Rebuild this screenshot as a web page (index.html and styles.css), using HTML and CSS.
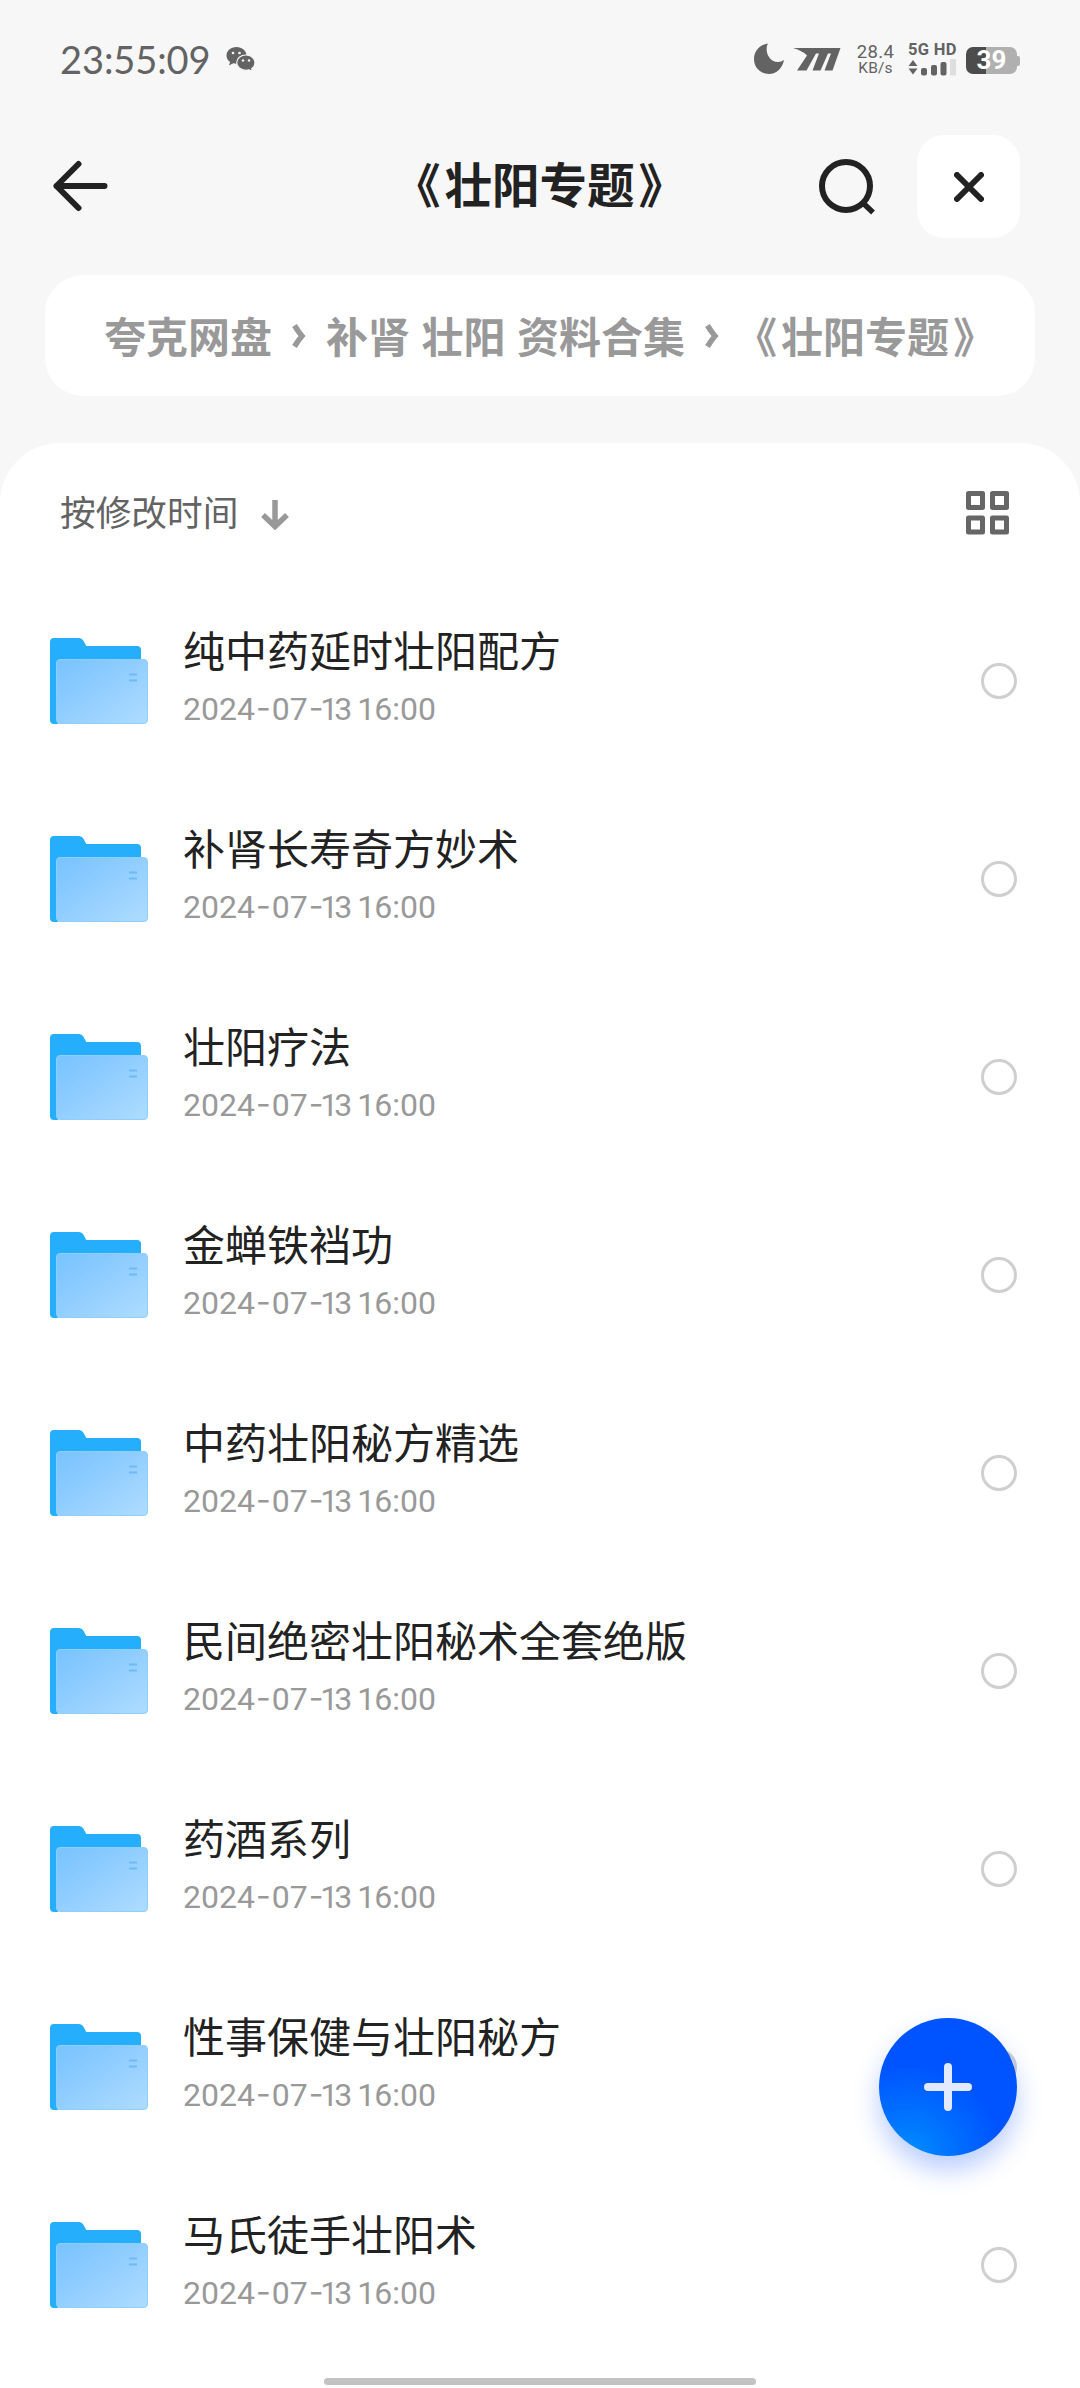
FILE: index.html
```html
<!DOCTYPE html>
<html lang="zh-CN">
<head>
<meta charset="utf-8">
<title>《壮阳专题》</title>
<link rel="stylesheet" href="styles.css">
</head>
<body>
<svg class="defs" width="0" height="0" aria-hidden="true">
  <defs>
    <linearGradient id="front" x1="0" y1="0.1" x2="0.9" y2="1">
      <stop offset="0" stop-color="#7ac4ff"/>
      <stop offset="0.35" stop-color="#8bcbff"/>
      <stop offset="1" stop-color="#acdbff"/>
    </linearGradient>
    <symbol id="folder" viewBox="0 0 98 86">
      <path d="M4 0H29Q32 0 33.300 2.500L36.300 8H87Q91 8 91 12V40H8V86H4Q0 86 0 82V4Q0 0 4 0Z" fill="#25aefc"/>
      <rect x="6.500" y="21.500" width="91" height="64" rx="3.500" fill="url(#front)" stroke="#8fcfff"/>
      <path d="M79 36.500H87M79 42.500H87" stroke="#6fb9f4" stroke-width="2.200"/>
    </symbol>
  </defs>
</svg>
<div class="screen">
  <div class="status">
    <span class="clock">23:55:09</span>
    <svg class="wechat" width="30" height="26" viewBox="0 0 30 26">
      <path d="M10.500 1C4.700 1 .5 4.800.5 9.500c0 2.700 1.400 4.900 3.600 6.500L3 19.500 7.200 17.300c1 .3 2.200.5 3.300.5C16 17.800 20.500 14 20.500 9.500S16 1 10.500 1Z" fill="#636363"/>
      <path d="M20 9C14.600 9 10.700 12.500 10.700 16.700S14.600 24.300 20 24.300c1.100 0 2.100-.2 3.100-.5L26.500 25.600 25.700 22.800C27.800 21.300 29 19.200 29 16.700 29 12.500 25 9 20 9Z" fill="#636363" stroke="#f7f7f7" stroke-width="1.200"/>
      <g fill="#f7f7f7"><circle cx="7" cy="7" r="1.300"/><circle cx="13.500" cy="7" r="1.300"/><circle cx="17" cy="14.500" r="1.200"/><circle cx="23" cy="14.500" r="1.200"/></g>
    </svg>
    <svg class="moon" width="30" height="31" viewBox="0 0 30 31"><path d="M14 .5C10 8 15 19 24 19Q27 19 30 17C28.500 25 22.500 31 15 31 6.500 31 0 24.500 0 16 0 8 6 1.500 14 .5Z" fill="#636363"/></svg>
    <svg class="mlogo" width="48" height="23" viewBox="0 0 48 23"><path d="M0 0H47.500L39.500 22.500H31.500L38 5.500H35L27.500 22.500H19.500L26 5.500H23L13.500 22.500H4L14 7.500Q10 3 0 0Z" fill="#636363"/></svg>
    <div class="speed"><span class="rate">28.4</span><span class="unit">KB/s</span></div>
    <div class="signal">
      <span class="net">5G HD</span>
      <svg width="48" height="17" viewBox="0 0 48 17">
        <path d="M5 1 9.500 7H.5ZM5 15.500 9.500 9.500H.5Z" fill="#636363"/>
        <rect x="13" y="9" width="6" height="7.500" rx="2" fill="#636363"/><rect x="23" y="6" width="6" height="10.500" rx="2" fill="#636363"/><rect x="32.500" y="3" width="6" height="13.500" rx="2" fill="#636363"/><rect x="42" y="0" width="6" height="16.500" rx="1" fill="#dedede"/>
      </svg>
    </div>
    <div class="battery"><span>39</span></div>
  </div>

  <header class="bar">
    <svg class="back" width="56" height="52" viewBox="0 0 56 52"><path d="M26 4 4 26 26 48M4 26H52" transform="translate(-.5 0)" fill="none" stroke="#222" stroke-width="6" stroke-linecap="round" stroke-linejoin="round"/></svg>
    <h1><span class="open">《</span>壮阳专题<span class="shut">》</span></h1>
    <svg class="search" width="58" height="58" viewBox="0 0 58 58"><circle cx="27" cy="27" r="24" fill="none" stroke="#222" stroke-width="6"/><path d="M43.500 43.500 54 53.500" stroke="#222" stroke-width="5.500"/></svg>
    <div class="close"><svg width="30" height="30" viewBox="0 0 30 30"><path d="M3 3 27 27M27 3 3 27" stroke="#222" stroke-width="6" stroke-linecap="round"/></svg></div>
  </header>

  <nav class="crumbs">
    <span>夸克网盘</span>
    <svg width="14" height="24" viewBox="0 0 14 24"><path d="M2.500 1.500Q6.500 8 10 12 6.500 16 2.500 22.500" fill="none" stroke="#999" stroke-width="5.500"/></svg>
    <span>补肾 壮阳 资料合集</span>
    <svg width="14" height="24" viewBox="0 0 14 24"><path d="M2.500 1.500Q6.500 8 10 12 6.500 16 2.500 22.500" fill="none" stroke="#999" stroke-width="5.500"/></svg>
    <span class="current"><span class="open">《</span>壮阳专题<span class="shut">》</span></span>
  </nav>

  <main class="panel">
    <div class="sort">
      <span>按修改时间</span>
      <svg class="down" width="30" height="32" viewBox="0 0 30 32"><path d="M15 2V27M3 17 15 28.500 27 17" fill="none" stroke="#999" stroke-width="5.500"/></svg>
      <svg class="grid" width="44" height="44" viewBox="0 0 44 44"><g fill="none" stroke="#666" stroke-width="5" stroke-linejoin="round"><rect x="2.500" y="2.500" width="14" height="14"/><rect x="26.500" y="2.500" width="14" height="14"/><rect x="2.500" y="27" width="14" height="14"/><rect x="26.500" y="27" width="14" height="14"/></g></svg>
    </div>
    <ul class="list">
      <li><svg class="folder"><use href="#folder"/></svg><div class="info"><h2>纯中药延时壮阳配方</h2><p>2024<b>-</b>07<b>-</b><span class="one">1</span>3 <span class="ten">1</span>6:00</p></div><i></i></li>
      <li><svg class="folder"><use href="#folder"/></svg><div class="info"><h2>补肾长寿奇方妙术</h2><p>2024<b>-</b>07<b>-</b><span class="one">1</span>3 <span class="ten">1</span>6:00</p></div><i></i></li>
      <li><svg class="folder"><use href="#folder"/></svg><div class="info"><h2>壮阳疗法</h2><p>2024<b>-</b>07<b>-</b><span class="one">1</span>3 <span class="ten">1</span>6:00</p></div><i></i></li>
      <li><svg class="folder"><use href="#folder"/></svg><div class="info"><h2>金蝉铁裆功</h2><p>2024<b>-</b>07<b>-</b><span class="one">1</span>3 <span class="ten">1</span>6:00</p></div><i></i></li>
      <li><svg class="folder"><use href="#folder"/></svg><div class="info"><h2>中药壮阳秘方精选</h2><p>2024<b>-</b>07<b>-</b><span class="one">1</span>3 <span class="ten">1</span>6:00</p></div><i></i></li>
      <li><svg class="folder"><use href="#folder"/></svg><div class="info"><h2>民间绝密壮阳秘术全套绝版</h2><p>2024<b>-</b>07<b>-</b><span class="one">1</span>3 <span class="ten">1</span>6:00</p></div><i></i></li>
      <li><svg class="folder"><use href="#folder"/></svg><div class="info"><h2>药酒系列</h2><p>2024<b>-</b>07<b>-</b><span class="one">1</span>3 <span class="ten">1</span>6:00</p></div><i></i></li>
      <li><svg class="folder"><use href="#folder"/></svg><div class="info"><h2>性事保健与壮阳秘方</h2><p>2024<b>-</b>07<b>-</b><span class="one">1</span>3 <span class="ten">1</span>6:00</p></div><i></i></li>
      <li><svg class="folder"><use href="#folder"/></svg><div class="info"><h2>马氏徒手壮阳术</h2><p>2024<b>-</b>07<b>-</b><span class="one">1</span>3 <span class="ten">1</span>6:00</p></div><i></i></li>
    </ul>
  </main>
  <div class="fab"><svg width="48" height="48" viewBox="0 0 48 48"><path d="M24 4V44M4 24H44" stroke="#e3eaff" stroke-width="8" stroke-linecap="round"/></svg></div>
  <div class="home"></div>
</div>
</body>
</html>
```
FILE: styles.css
```css
* { box-sizing: border-box; margin: 0; padding: 0; }
body { background: #f7f7f7; font-family: "Noto Sans CJK SC", sans-serif; color: #222; }
svg { display: block; flex: none; }
.defs { position: absolute; }
.screen { position: relative; width: 1080px; height: 2388px; overflow: hidden; display: flex; flex-direction: column; }

.status { height: 120px; flex: none; display: flex; align-items: center; padding: 0 60px 0 60px; color: #636363; white-space: nowrap; }
.clock { font: 400 38px/44px Lato, sans-serif; width: 166px; margin-top: -3px; letter-spacing: -.1px; }
.wechat { margin-top: -3px; }
.moon { margin-left: auto; margin-top: -3px; }
.mlogo { margin-left: 9px; margin-top: -2px; }
.speed { display: flex; flex-direction: column; align-items: center; margin: -1px 0 0 15px; width: 39px; font-family: Roboto, sans-serif; }
.rate { font-size: 18.500px; line-height: 16px; letter-spacing: .4px; }
.unit { font-size: 15.500px; line-height: 16px; letter-spacing: .2px; }
.signal { display: flex; flex-direction: column; gap: 3px; margin: -2px 0 0 13px; width: 48px; }
.net { font: 700 16.500px/13px Roboto, sans-serif; letter-spacing: .3px; }
.battery { position: relative; width: 51px; height: 27px; margin: 0 3px 0 10px; border-radius: 7px; background: linear-gradient(90deg, #4c4c4c 20px, #b0b0b0 20px); display: flex; align-items: center; justify-content: center; color: #fff; font: 700 26px/27px Roboto, sans-serif; }
.battery::after { content: ""; position: absolute; right: -3px; top: 9px; width: 3px; height: 10px; background: #b0b0b0; border-radius: 0 2px 2px 0; }

.bar { height: 155px; flex: none; display: grid; grid-template-columns: 347px 280px 172px auto; padding: 15px 60px 0 53px; align-items: start; justify-content: start; }
.back { margin-top: 25px; }
h1 { grid-column: 2; font-size: 47.500px; line-height: 70px; font-weight: 700; white-space: nowrap; margin: 13px 0 0 -7px; }
.open { margin-right: 4px; }
.shut { margin-left: 4px; }
.search { margin: 24px 0 0 139px; }
.close { width: 103px; height: 103px; margin-left: 65px; background: #fff; border-radius: 27px; display: flex; align-items: center; justify-content: center; }

.crumbs { width: 990px; height: 121px; flex: none; margin-left: 45px; background: #fff; border-radius: 38px; display: flex; align-items: center; padding: 0 0 2px 59px; color: #999; font-size: 42px; line-height: 60px; font-weight: 700; white-space: pre; word-spacing: 2px; }
.crumbs svg { margin: 2px 20px 0; }
.crumbs .current { margin-left: -4px; }

.panel { margin-top: 47px; flex: 1; background: #fff; border-radius: 60px 60px 0 0; }
.sort { height: 139px; display: flex; align-items: center; padding: 0 70px 0 60px; color: #636363; font-size: 35.700px; line-height: 52px; }
.sort span { margin-top: -3px; }
.down { margin-left: 22px; margin-top: 2px; }
.grid { margin-left: auto; }
.list { list-style: none; }
.list li { height: 198px; display: flex; align-items: center; padding: 0 63px 0 50px; }
.folder { width: 98px; height: 86px; }
.info { margin-left: 35px; flex: 1; padding-bottom: 14px; }
h2 { font-size: 42px; line-height: 60px; font-weight: 400; white-space: nowrap; }
p { font: 400 32px/40px Roboto, sans-serif; color: #999; margin-top: 10px; white-space: nowrap; }
p b { font: 400 32px/0 Inter, sans-serif; padding: 0 1px; vertical-align: 1px; }
.one { margin: 0 -4px; }
.ten { margin: 0 -1px 0 -3px; }
i { width: 36px; height: 36px; border: 3px solid #cfcfcf; border-radius: 50%; flex: none; }

.fab { position: absolute; left: 879px; top: 2018px; width: 138px; height: 138px; border-radius: 50%; background: radial-gradient(circle at 22% 100%, #0090ff 0, #0078ff 18%, #0054ff 52%); box-shadow: 0 14px 26px rgba(40, 100, 255, .32); display: flex; align-items: center; justify-content: center; }
.home { position: absolute; left: 324px; top: 2378px; width: 432px; height: 7px; border-radius: 4px; background: #c3c3c3; }
```
